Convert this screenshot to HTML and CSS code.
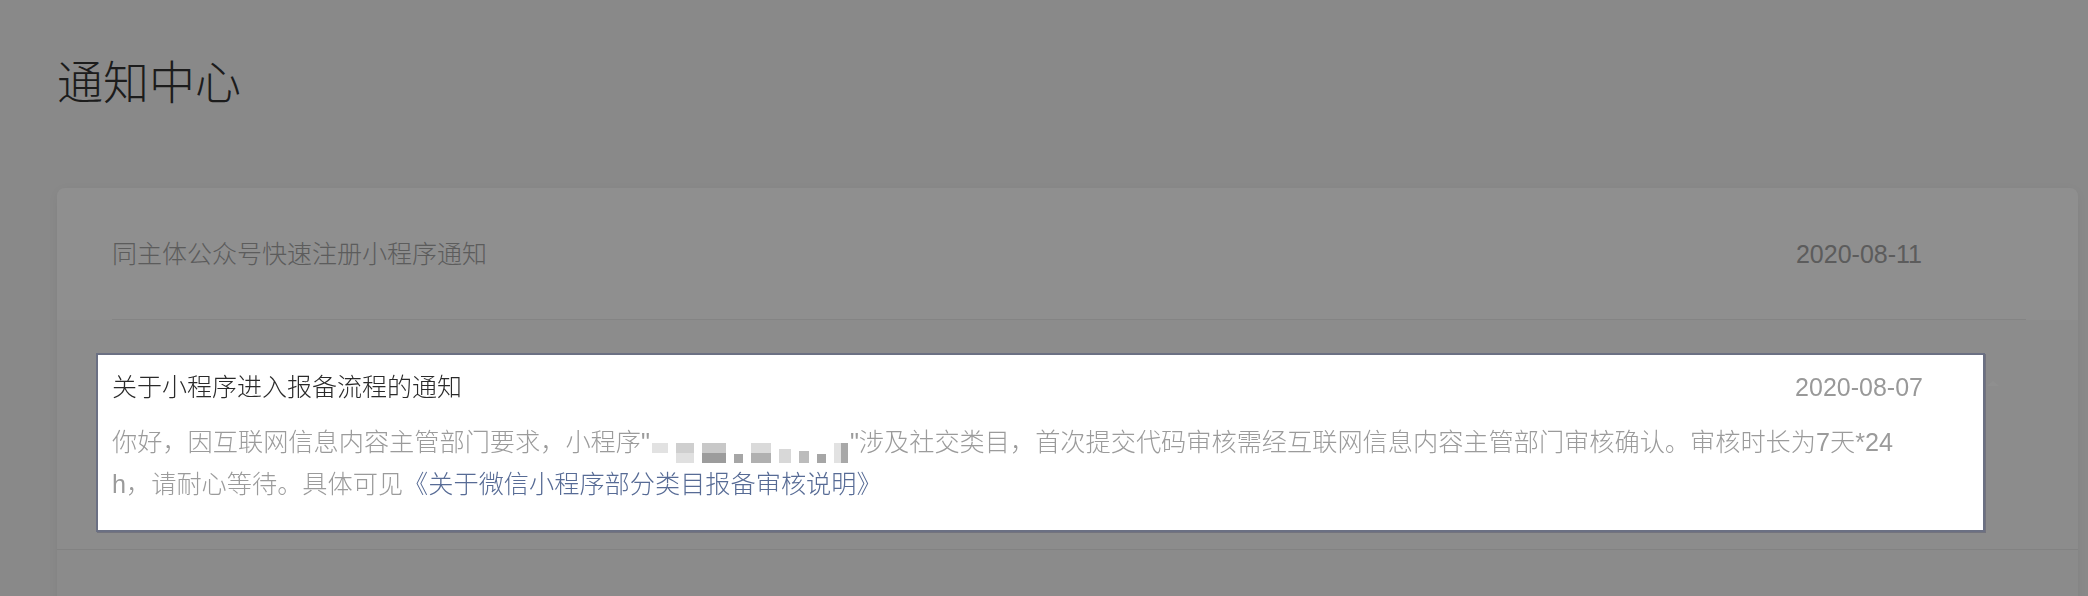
FILE: index.html
```html
<!DOCTYPE html>
<html lang="zh-CN">

<head>
    <meta charset="UTF-8">
    <meta name="viewport" content="width=device-width, initial-scale=1.0">
    <title>通知中心</title>
    <link rel="stylesheet" href="styles.css">
</head>

<body>

    <div class="page">
        <h1 class="pageTitle">通知中心</h1>

        <div class="card">
            <div class="item">
                <div class="itemHead">
                    <div class="itemTitle read">同主体公众号快速注册小程序通知</div>
                    <div class="date read">2020-08-11</div>
                    <span class="caret down"></span>
                </div>
            </div>

            <div class="item open">
                <div class="hl">
                    <div class="hlHead">
                        <div class="itemTitle">关于小程序进入报备流程的通知</div>
                        <div class="date">2020-08-07</div>
                    </div>
                    <div class="msg">你好，因互联网信息内容主管部门要求，小程序"<span class="blur"><i class="b1"></i><i class="b2"></i><i class="b3"></i><i class="dot"></i><i class="b4"></i><i class="b5"></i><i class="b6"></i><i class="dot"></i><i class="b7"></i></span>"涉及社交类目，首次提交代码审核需经互联网信息内容主管部门审核确认。审核时长为7天*24h，请耐心等待。具体可见<a class="link" href="#">《关于微信小程序部分类目报备审核说明》</a></div>
                </div>
                <span class="caret up"></span>
            </div>

            <div class="item rest"></div>
        </div>
    </div>

    <div class="shade"></div>

</body>

</html>
```

FILE: styles.css
```css
body {
    margin: 0;
    background-color: #f5f5f5;
    font-family: "Liberation Sans", "Noto Sans CJK SC", sans-serif;
    font-weight: 300;
    overflow: hidden;
}

.page {
    padding: 0 10px 0 57px;
}

.pageTitle {
    margin: 0;
    padding-top: 54px;
    font-size: 46px;
    line-height: 58px;
    font-weight: 300;
    color: #333;
}

.card {
    margin-top: 76px;
    background-color: #fff;
    border-radius: 8px;
    box-shadow: 0 2px 14px rgba(0, 0, 0, 0.06);
}

.item {
    padding: 0 52px 0 55px;
}

.itemHead {
    display: flex;
    align-items: center;
    height: 131px;
    border-bottom: 1px solid #ececec;
}

.itemTitle {
    flex: 1;
    font-size: 25px;
    line-height: 40px;
    color: #2a2a2a;
}

.date {
    font-size: 25px;
    line-height: 40px;
    color: #999;
}

.read {
    color: #a4a4a4;
}

.caret {
    width: 0;
    height: 0;
    border-left: 6px solid transparent;
    border-right: 6px solid transparent;
    margin: 0 27px 0 65px;
}

.down {
    border-top: 5px solid #fff;
    margin-top: -5px;
}

.open {
    display: flex;
    align-items: flex-start;
    padding: 33px 52px 17px 39px;
    background-color: #fafafa;
    border-bottom: 1px solid #e8e8e8;
}

.up {
    border-bottom: 5px solid #fff;
    margin: 28px 27px 0 2px;
}

.hl {
    position: relative;
    z-index: 11;
    flex: 1;
    background-color: #fff;
    border: 2px solid #6b7083;
    box-shadow: 1px 1px 0 rgba(90, 90, 110, 0.5);
    padding: 12px 60px 25px 14px;
}

.hlHead {
    display: flex;
    align-items: center;
}

.msg {
    margin-top: 14px;
    font-size: 25.2px;
    line-height: 42px;
    color: #9b9b9b;
    word-break: break-all;
}

.link {
    color: #576b95;
    text-decoration: none;
}

.blur {
    display: inline-flex;
    align-items: flex-end;
    justify-content: space-between;
    width: 196px;
    height: 22px;
    margin: 0 2px;
    vertical-align: -2px;
}

.blur i {
    display: block;
    height: 20px;
    background-color: #d6d6d6;
}

.blur .b1 { width: 16px; height: 10px; margin-bottom: 10px; background-color: #e2e2e2; }
.blur .b2 { width: 18px; background: linear-gradient(#cfcfcf 50%, #e0e0e0 50%); }
.blur .b3 { width: 24px; background: linear-gradient(#c8c8c8 50%, #9c9c9c 50%); }
.blur .b4 { width: 20px; background: linear-gradient(#dadada 50%, #b0b0b0 50%); }
.blur .b5 { width: 12px; height: 14px; background-color: #d8d8d8; }
.blur .b6 { width: 10px; height: 12px; background-color: #bcbcbc; }
.blur .b7 { width: 14px; background: linear-gradient(90deg, #e2e2e2 50%, #a8a8a8 50%); }
.blur .dot { width: 9px; height: 9px; background-color: #a6a6a6; }

.rest {
    height: 120px;
    background-color: #f8f8f8;
}

.shade {
    position: fixed;
    top: 0;
    left: 0;
    right: 0;
    bottom: 0;
    z-index: 10;
    background-color: rgba(0, 0, 0, 0.44);
}
```
